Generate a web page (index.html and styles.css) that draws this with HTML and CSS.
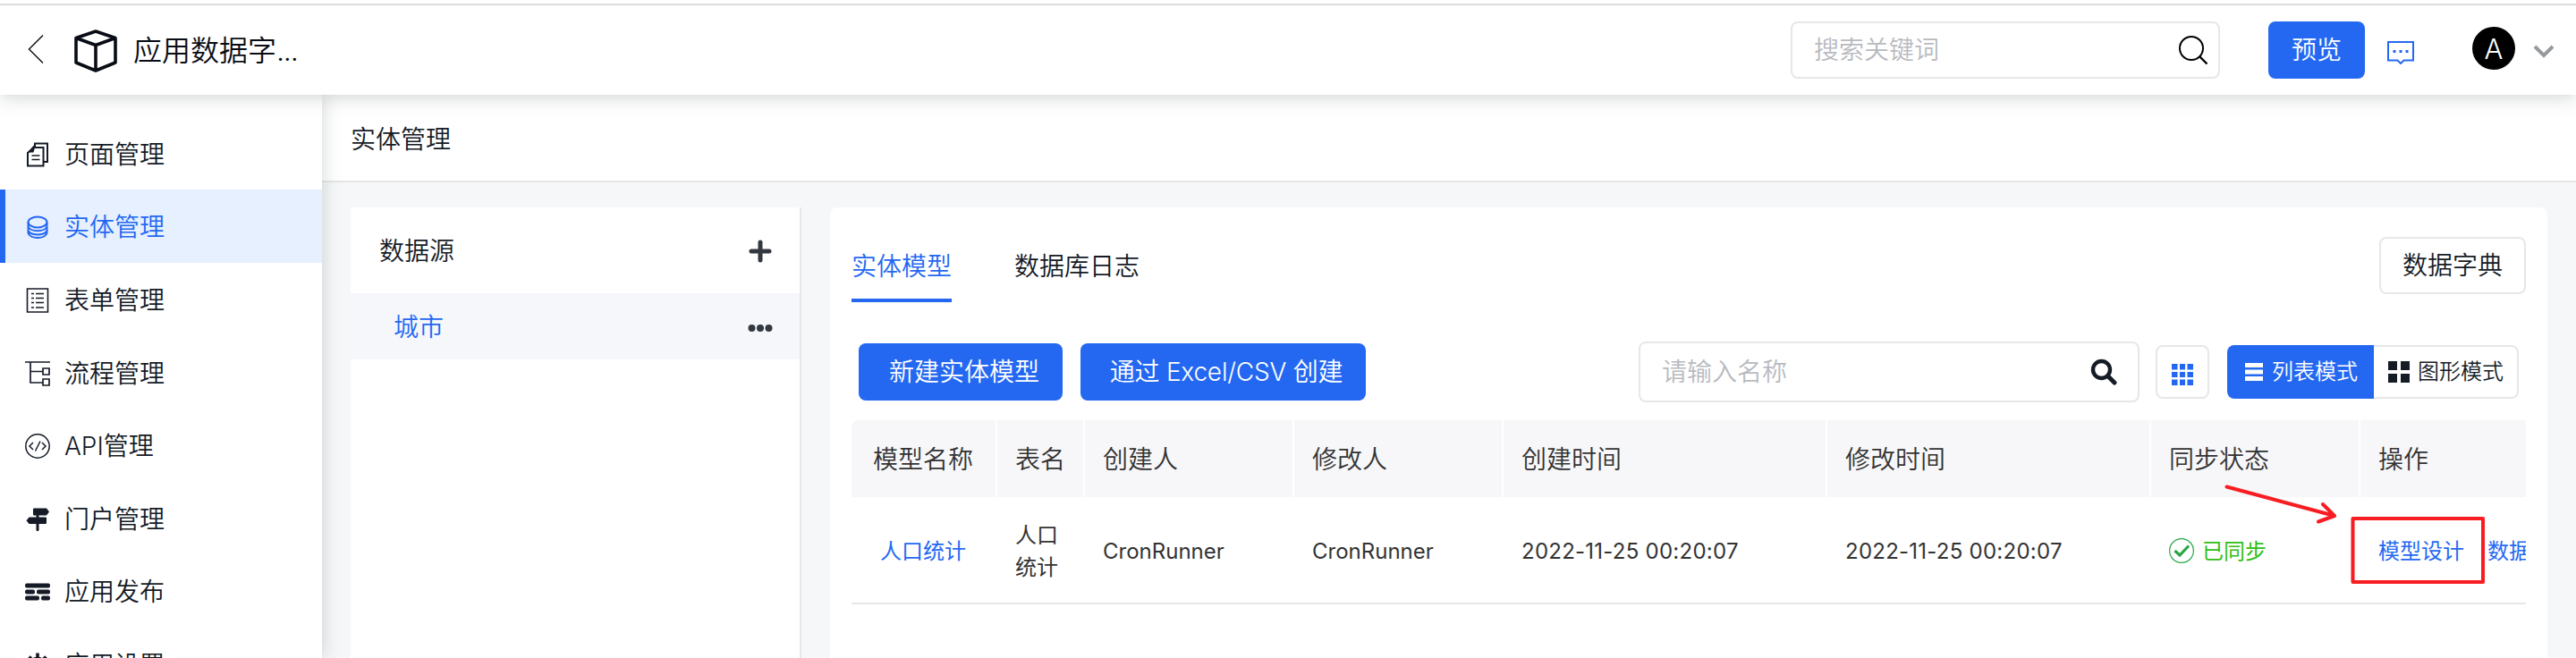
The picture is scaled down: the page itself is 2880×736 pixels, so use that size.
FILE: index.html
```html
<!DOCTYPE html>
<html lang="zh-CN">
<head>
<meta charset="utf-8">
<title>实体管理</title>
<link rel="stylesheet" href="styles.css">
</head>
<body>
<header class="topbar">
  <svg class="back" width="18" height="34" viewBox="0 0 18 34"><path d="M17 1.5 1.5 17 17 32.5" fill="none" stroke="#10141c" stroke-width="1.5"/></svg>
  <svg class="cube" width="48" height="48" viewBox="0 0 48 48"><path d="M24 2 46 9.5V37L24 46 2 37V9.5ZM2 9.5 24 17.500 46 9.5M24 17.500V46" fill="none" stroke="#080c14" stroke-width="3.6" stroke-linejoin="round"/></svg>
  <h1 class="app-name">应用数据字<span class="dots">...</span></h1>
  <div class="search search-global">
    <span class="placeholder">搜索关键词</span>
    <svg width="34" height="34" viewBox="0 0 34 34"><circle cx="15" cy="15" r="13" fill="none" stroke="#000" stroke-width="2"/><path d="M24.500 24.500 32.500 32.500" stroke="#000" stroke-width="2.400"/></svg>
  </div>
  <button class="btn primary preview">预览</button>
  <svg class="comment" width="30" height="26" viewBox="0 0 30 26"><path d="M1 1H29V21.500H18.500L15 25 11.500 21.500H1Z" fill="none" stroke="#2468f2" stroke-width="2"/><path d="M6.500 10h3v3h-3zM13.500 10h3v3h-3zM20.500 10h3v3h-3z" fill="#2468f2"/></svg>
  <span class="avatar">A</span>
  <svg class="chevron" width="24" height="16" viewBox="0 0 24 16"><path d="M2 2 12 12 22 2" fill="none" stroke="#979a9c" stroke-width="4"/></svg>
</header>
<div class="shell">
  <nav class="sidebar">
    <a class="item"><svg width="28" height="28" viewBox="0 0 28 28"><path d="M11 6V1.500H25V22H21M3 12 10 6H20.500V26.500H3Z" fill="none" stroke="currentColor" stroke-width="2"/><path d="M2 12.500 12 1 12 2 9.500 11.500H2Z" fill="currentColor"/><path d="M7.500 15h9M7.500 19.500h9" stroke="currentColor" stroke-width="1.600"/></svg>页面管理</a>
    <a class="item active"><svg width="28" height="28" viewBox="0 0 28 28"><g fill="none" stroke="currentColor" stroke-width="2"><ellipse cx="14" cy="8.500" rx="10.500" ry="6"/><path d="M3.500 8.500V20.500C5 27.800 23 27.800 24.500 20.500V8.500M3.500 13C5 20 23 20 24.500 13M3.500 17.500C5 24 23 24 24.500 17.500"/></g></svg>实体管理</a>
    <a class="item"><svg width="28" height="28" viewBox="0 0 28 28"><path d="M2.500 1H25.500V27H2.500Z" fill="none" stroke="currentColor" stroke-width="1.600"/><path d="M7 6.500h3M12 6.500h9M7 11.500h3M12 11.500h9M7 16.500h3M12 16.500h9M7 22h3M12 22h9" stroke="currentColor" stroke-width="1.600"/></svg>表单管理</a>
    <a class="item"><svg width="28" height="28" viewBox="0 0 28 28"><path d="M0 1H28M6 1V24H20M6 11.500H20M20 8h7v7h-7zM20 20h7v7h-7z" fill="none" stroke="currentColor" stroke-width="1.700"/></svg>流程管理</a>
    <a class="item"><svg width="28" height="28" viewBox="0 0 28 28"><g fill="none" stroke="currentColor" stroke-width="1.500"><circle cx="14" cy="14" r="13.200"/><path d="M9 10 5 14 9 18M19 10 23 14 19 18M17 8.500 11.500 19.500"/></g></svg>API管理</a>
    <a class="item"><svg width="28" height="28" viewBox="0 0 28 28"><path d="M10 1.500H24L27 5.500 24 9.500H15.500V11.500H23Q24 11.500 24 12.500V18Q24 19 23 19H15.500V26Q15.500 27 14 27T12.500 26V19H4.500L1.500 15.200 4.500 11.500H12.500V9.500H10Q9 9.500 9 8.500V2.500Q9 1.500 10 1.500Z" fill="currentColor"/></svg>门户管理</a>
    <a class="item"><svg width="28" height="28" viewBox="0 0 28 28"><g fill="currentColor"><rect y="4.500" width="28" height="5" rx="2"/><rect y="11.500" width="11" height="5" rx="2"/><rect x="13" y="11.500" width="15" height="5" rx="2"/><rect y="18.500" width="16" height="5" rx="2"/><rect x="18" y="18.500" width="10" height="5" rx="2"/></g></svg>应用发布</a>
    <a class="item"><svg width="28" height="28" viewBox="0 0 28 28"><g fill="none" stroke="currentColor"><circle cx="14" cy="14" r="7" stroke-width="5"/><path d="M14 .5V6M14 22v5.500M.5 14H6M22 14h5.500M4.500 4.500 8 8M20 20l3.500 3.500M23.500 4.500 20 8M8 20l-3.500 3.500" stroke-width="3.600"/></g></svg>应用设置</a>
  </nav>
  <main class="main">
    <div class="crumb">实体管理</div>
    <div class="content">
      <section class="sources">
        <div class="sources-head">数据源
          <svg width="26" height="26" viewBox="0 0 26 26"><path d="M13 3V23M3 13H23" stroke="#343941" stroke-width="5" stroke-linecap="round"/></svg>
        </div>
        <div class="source">城市
          <svg width="28" height="10" viewBox="0 0 28 10"><g fill="#343941"><circle cx="4.500" cy="5" r="4"/><circle cx="14" cy="5" r="4"/><circle cx="23.500" cy="5" r="4"/></g></svg>
        </div>
      </section>
      <section class="panel">
        <div class="tabs">
          <a class="tab on">实体模型</a>
          <a class="tab">数据库日志</a>
          <button class="btn outline dict">数据字典</button>
        </div>
        <div class="toolbar">
          <button class="btn primary create">新建实体模型</button>
          <button class="btn primary import">通过 Excel/CSV 创建</button>
          <div class="search search-name">
            <span class="placeholder">请输入名称</span>
            <svg width="30" height="30" viewBox="0 0 30 30"><circle cx="12.500" cy="12.500" r="9.500" fill="none" stroke="#161c26" stroke-width="4.400"/><path d="M19.500 19.500 27 27" stroke="#161c26" stroke-width="5" stroke-linecap="round"/></svg>
          </div>
          <button class="btn outline grid-btn"><svg width="24" height="24" viewBox="0 0 24 24"><path d="M0 0h6.500v6.500H0zM9 0h6v6.500H9zM17.500 0H24v6.500h-6.500zM0 9h6.500v6H0zM9 9h6v6H9zM17.500 9H24v6h-6.500zM0 17.500h6.500V24H0zM9 17.500h6V24H9zM17.500 17.500H24V24h-6.500z" fill="#2468f2"/></svg></button>
          <div class="modes">
            <span class="mode on"><svg width="20" height="20" viewBox="0 0 20 20"><path d="M0 0h20v5H0zM0 7.500h20v5H0zM0 15h20v5H0z" fill="#fff"/></svg>列表模式</span>
            <span class="mode"><svg width="24" height="24" viewBox="0 0 24 24"><path d="M0 0h10v10H0zM14 0h10v10H14zM0 14h10v10H0zM14 14h10v10H14z" fill="#161c26"/></svg>图形模式</span>
          </div>
        </div>
        <div class="table">
          <div class="row head">
            <span>模型名称</span><span>表名</span><span>创建人</span><span>修改人</span><span>创建时间</span><span>修改时间</span><span>同步状态</span><span>操作</span>
          </div>
          <div class="row body">
            <span class="link name">人口统计</span><span>人口<br>统计</span><span>CronRunner</span><span>CronRunner</span><span class="date">2022-11-25 00:20:07</span><span class="date">2022-11-25 00:20:07</span>
            <span class="status"><svg width="28" height="28" viewBox="0 0 28 28"><circle cx="14" cy="14" r="13.400" fill="none" stroke="#28a745" stroke-width="1.200"/><path d="M6.500 14 12 19 22 8.500" fill="none" stroke="#28a745" stroke-width="3.200"/></svg>已同步</span>
            <span class="link actions"><a>模型设计</a><a>数据</a></span>
          </div>
        </div>
      </section>
    </div>
  </main>
</div>
<svg class="annotation" width="300" height="120" viewBox="0 0 300 120"><g fill="none" stroke="#f81d22" stroke-width="4" stroke-linecap="round" stroke-linejoin="round"><path d="M9.500 4.500 130 37M117 24 130 37 112 43.500"/><path d="M150.500 40H296V111H150.500Z"/></g></svg>
</body>
</html>
```
FILE: styles.css
```css
* { box-sizing: border-box; }
body {
  margin: 0;
  width: 2880px;
  height: 736px;
  overflow: hidden;
  position: relative;
  display: flex;
  flex-direction: column;
  background: #f5f7f8;
  color: #151b26;
  font: 350 28px/40px Inter, "Noto Sans CJK SC", sans-serif;
  white-space: nowrap;
}
svg { display: block; flex: none; }
.topbar {
  height: 106px;
  flex: none;
  display: flex;
  align-items: center;
  padding: 6px 24px 0 31px;
  background: linear-gradient(#fff 4px, #dcdcdc 4px, #dcdcdc 6px, #fff 6px);
  box-shadow: 0 2px 20px rgba(60, 70, 68, .25);
  position: relative;
  z-index: 3;
}
.back { margin-top: -2px; }
.cube { margin: 2px 0 0 34px; }
.app-name { margin: 2px auto 0 18px; font-size: 32px; font-weight: 350; color: #080c14; }
.dots { letter-spacing: -1.200px; }
.search {
  display: flex;
  align-items: center;
  justify-content: space-between;
  border: 2px solid #e6e7e9;
  border-radius: 8px;
  background: #fff;
}
.placeholder { color: #b8babf; }
.search-global { width: 480px; height: 64px; padding: 0 11px 0 24px; }
.btn {
  height: 64px;
  padding: 0;
  border: 0;
  border-radius: 8px;
  font: inherit;
  color: inherit;
  text-align: center;
}
.primary { background: #2468f2; color: #fff; }
.outline { background: #fff; border: 2px solid #e6e7e9; }
.preview { width: 108px; margin-left: 54px; }
.comment { margin: 5px 0 0 25px; }
.avatar {
  width: 48px;
  height: 48px;
  margin: -4px 0 0 65px;
  border-radius: 50%;
  background: #000;
  color: #fff;
  font-size: 31px;
  line-height: 49px;
  text-align: center;
}
.chevron { margin: 3px 0 0 20px; }
.shell { flex: 1; min-height: 0; display: flex; overflow: hidden; }
.sidebar {
  width: 360px;
  flex: none;
  padding-top: 24.500px;
  background: #fff;
  box-shadow: 0 0 20px rgba(60, 70, 68, .22);
  position: relative;
  z-index: 2;
}
.item {
  height: 81.600px;
  display: flex;
  align-items: center;
  gap: 16px;
  padding: 3px 0 0 22px;
  border-left: 6px solid transparent;
}
.active { background: #e6f0ff; border-color: #2468f2; color: #2468f2; }
.main { flex: 1; min-width: 0; display: flex; flex-direction: column; }
.crumb {
  height: 98px;
  flex: none;
  padding: 30px 32px 0;
  background: #fff;
  border-bottom: 2px solid #e4e5e7;
}
.content {
  flex: 1;
  display: grid;
  grid-template-columns: 504px 1920px;
  gap: 32px;
  padding: 28px 32px 0;
}
.sources { background: #fff; border-right: 2px solid #e6e7e9; }
.sources-head, .source { display: flex; align-items: center; justify-content: space-between; }
.sources-head { height: 96px; padding: 1px 31px 0 32px; }
.source { height: 74px; padding: 1px 30px 0 48px; background: #f6f7fb; color: #2468f2; }
.source svg { margin-top: 3px; }
.panel { background: #fff; border-radius: 8px 8px 0 0; padding: 33px 24px 0; }
.tabs { display: flex; gap: 70px; }
.tab { height: 73px; padding-top: 13px; }
.tab.on { color: #2468f2; border-bottom: 4px solid #2468f2; }
.dict { width: 164px; margin-left: auto; }
.toolbar { height: 68px; margin: 44px 0 20px; padding: 0 8px; display: flex; align-items: center; }
.create { width: 228px; padding-left: 8px; }
.import { width: 319px; margin-left: 20px; padding-left: 7px; letter-spacing: -.200px; }
.search-name { width: 560px; height: 68px; margin-left: auto; padding: 0 23px 0 24px; }
.grid-btn { width: 60px; height: 60px; margin-left: 18px; padding: 5px 0 0 16px; }
.modes { display: flex; margin-left: 20px; font-size: 24px; }
.mode {
  width: 162px;
  height: 60px;
  display: flex;
  align-items: center;
  gap: 9px;
  padding-left: 16px;
  border: 2px solid #e6e7e9;
  border-left: 0;
  border-radius: 0 8px 8px 0;
}
.mode.on {
  width: 164px;
  gap: 10px;
  padding-left: 20px;
  border: 0;
  border-radius: 8px 0 0 8px;
  background: #2468f2;
  color: #fff;
}
.table { overflow: hidden; border-radius: 8px 0 0 0; color: #333; }
.row { display: grid; grid-template-columns: 163px 98px 234px 234px 362px 362px 234px 185px; }
.row > span { display: flex; align-items: center; padding-left: 20px; overflow: hidden; }
.head { height: 86px; }
.head > span { padding-top: 1px; background: #f7f7f9; border-right: 2px solid #fff; }
.head > span:first-child { padding-left: 24px; }
.head > span:last-child { border-right: 0; }
.body { height: 120px; border-bottom: 2px solid #e6e7e9; font-size: 24px; line-height: 36px; }
.body > span { padding-top: 3px; font-weight: 400; }
.body .name { padding-left: 32px; }
.body .date { letter-spacing: .250px; }
.link { color: #2468f2; }
.status { gap: 9px; color: #30bf13; }
.status svg { margin-top: -1px; }
.actions { gap: 26px; }
.annotation { position: absolute; left: 2480px; top: 540px; z-index: 4; }
```
